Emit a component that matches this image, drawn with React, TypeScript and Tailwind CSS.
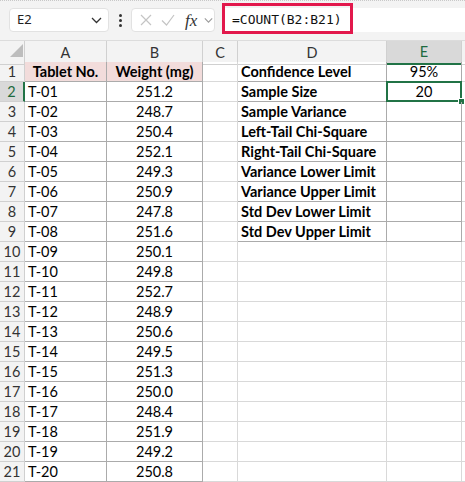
import React from "react";

const weights = [
  "251.2", "248.7", "250.4", "252.1", "249.3", "250.9", "247.8", "251.6", "250.1", "249.8",
  "252.7", "248.9", "250.6", "249.5", "251.3", "250.0", "248.4", "251.9", "249.2", "250.8",
];

const stats: [string, string][] = [
  ["Confidence Level", "95%"],
  ["Sample Size", "20"],
  ["Sample Variance", ""],
  ["Left-Tail Chi-Square", ""],
  ["Right-Tail Chi-Square", ""],
  ["Variance Lower Limit", ""],
  ["Variance Upper Limit", ""],
  ["Std Dev Lower Limit", ""],
  ["Std Dev Upper Limit", ""],
];

const cols = "grid grid-cols-[25px_82px_96px_35px_149px_75px_1fr]";
const grid = "border-[#d9d9d9]";
const dark = "border-[#ababab]";

function Chevron({ className }: { className?: string }) {
  return (
    <svg className={className} width="11" height="7" viewBox="0 0 11 7" fill="none">
      <path d="M1 1l4.5 4.5L10 1" stroke="currentColor" strokeWidth="1.3" />
    </svg>
  );
}

function TopBar() {
  return (
    <div className="h-[41px] bg-[#f3f3f3] relative flex items-center border-b border-[#dcdcdc]">
      <div className="absolute top-0 left-0 right-0 h-[2px] border-t border-dotted border-[#c8c8c8]" />
      <div className="ml-[9px] w-[100px] h-[24px] bg-white rounded-[4px] border border-[#e2e2e2] flex items-center justify-between pl-[7px] pr-[6px]">
        <span className="text-[13px] text-[#222]" style={{ fontFamily: "'Noto Sans', sans-serif" }}>E2</span>
        <Chevron className="text-[#333]" />
      </div>
      <div className="w-[22px] flex flex-col items-center gap-[2px]">
        <span className="w-[3px] h-[3px] bg-[#333] rounded-full" />
        <span className="w-[3px] h-[3px] bg-[#333] rounded-full" />
        <span className="w-[3px] h-[3px] bg-[#333] rounded-full" />
      </div>
      <div className="w-[84px] h-[24px] bg-white rounded-[4px] border border-[#e2e2e2] flex items-center pl-[8px]">
        <svg width="12" height="12" viewBox="0 0 12 12" fill="none">
          <path d="M1 1l10 10M11 1L1 11" stroke="#c4c4c4" strokeWidth="1.2" />
        </svg>
        <svg className="ml-[9px]" width="14" height="12" viewBox="0 0 14 12" fill="none">
          <path d="M1 6.5l4.5 4.5L13 1" stroke="#c4c4c4" strokeWidth="1.2" />
        </svg>
        <span className="ml-[10px] italic text-[17px] leading-none text-[#333]" style={{ fontFamily: "'Liberation Serif', serif" }}>fx</span>
        <Chevron className="text-[#9a9a9a] ml-[7px] w-[9px]" />
      </div>
      <div className="ml-[7px] flex-1 h-[24px] bg-white relative">
        <div className="absolute left-0 top-[-5px] w-[131px] h-[31px] border-[3px] border-[#e2184c]" />
        <span className="absolute left-[10px] top-[2px] text-[13px] text-[#111]" style={{ fontFamily: "'DejaVu Sans Mono', monospace" }}>
          =COUNT(B2:B21)
        </span>
      </div>
    </div>
  );
}

function Header() {
  const letters = ["A", "B", "C", "D", "E"];
  return (
    <div className={`${cols} h-[21px] bg-[#f3f3f3] text-[14.5px] text-[#333]`}>
      <div className="border-r border-b border-[#d0d0d0] relative">
        <svg className="absolute left-[10px] top-[3px]" width="13" height="13" viewBox="0 0 13 13">
          <path d="M13 0V13H0Z" fill="#bdbdbd" />
        </svg>
      </div>
      {letters.map((l) =>
        l === "E" ? (
          <div key={l} className="flex items-center justify-center bg-[#d9d9d9] border-r border-[#d0d0d0] border-b-2 border-b-[#217346] text-[#1e6b40]">
            {l}
          </div>
        ) : (
          <div key={l} className="flex items-center justify-center border-r border-b border-[#d0d0d0]">
            {l}
          </div>
        )
      )}
      <div className="border-b border-[#d0d0d0]" />
    </div>
  );
}

export default function App() {
  const rows = Array.from({ length: 21 }, (_, i) => i + 1);
  return (
    <div className="w-[465px] h-[482px] overflow-hidden bg-white" style={{ fontFamily: "Lato, 'Liberation Sans', sans-serif" }}>
      <TopBar />
      <Header />
      {rows.map((r) => {
        const stat = stats[r - 1];
        const sel = r === 2;
        return (
          <div key={r} className={`${cols} h-5 text-[14.5px] text-black leading-none`}>
            <div
              className={`flex items-center justify-center pt-px text-[14.5px] border-b border-[#d0d0d0] ${
                sel ? "bg-[#d9d9d9] text-[#1e6b40] border-r-2 border-r-[#217346]" : "bg-[#f3f3f3] text-[#333] border-r border-r-[#d0d0d0]"
              }`}
            >
              {r}
            </div>
            {r === 1 ? (
              <>
                <div className={`flex items-center justify-center pt-px font-bold bg-[#f2dcdb] border-r border-b ${dark}`}>Tablet No.</div>
                <div className={`flex items-center justify-center pt-px font-bold bg-[#f2dcdb] border-r border-b ${dark}`}>Weight (mg)</div>
              </>
            ) : (
              <>
                <div className={`flex items-center pl-[3px] pt-px border-r border-b ${dark}`}>
                  T-{String(r - 1).padStart(2, "0")}
                </div>
                <div className={`flex items-center justify-center pt-px border-r border-b ${dark}`}>{weights[r - 2]}</div>
              </>
            )}
            <div className={`border-b ${grid} border-r ${stat ? dark : grid}`} />
            {stat ? (
              <>
                <div className={`flex items-center pl-[3px] pt-px font-bold border-r border-b ${dark}`}>{stat[0]}</div>
                <div className={`relative flex items-center justify-center pt-px border-r border-b ${dark}`}>
                  {stat[1]}
                  {sel && (
                    <>
                      <div className="absolute -left-px -top-px -right-px -bottom-px border-2 border-[#217346]" />
                      <div className="absolute -right-[4px] -bottom-[4px] w-[7px] h-[7px] bg-[#217346] border border-white" />
                    </>
                  )}
                </div>
              </>
            ) : (
              <>
                <div className={`border-r border-b ${grid}`} />
                <div className={`border-r border-b ${grid}`} />
              </>
            )}
            <div className={`border-b ${grid}`} />
          </div>
        );
      })}
    </div>
  );
}
